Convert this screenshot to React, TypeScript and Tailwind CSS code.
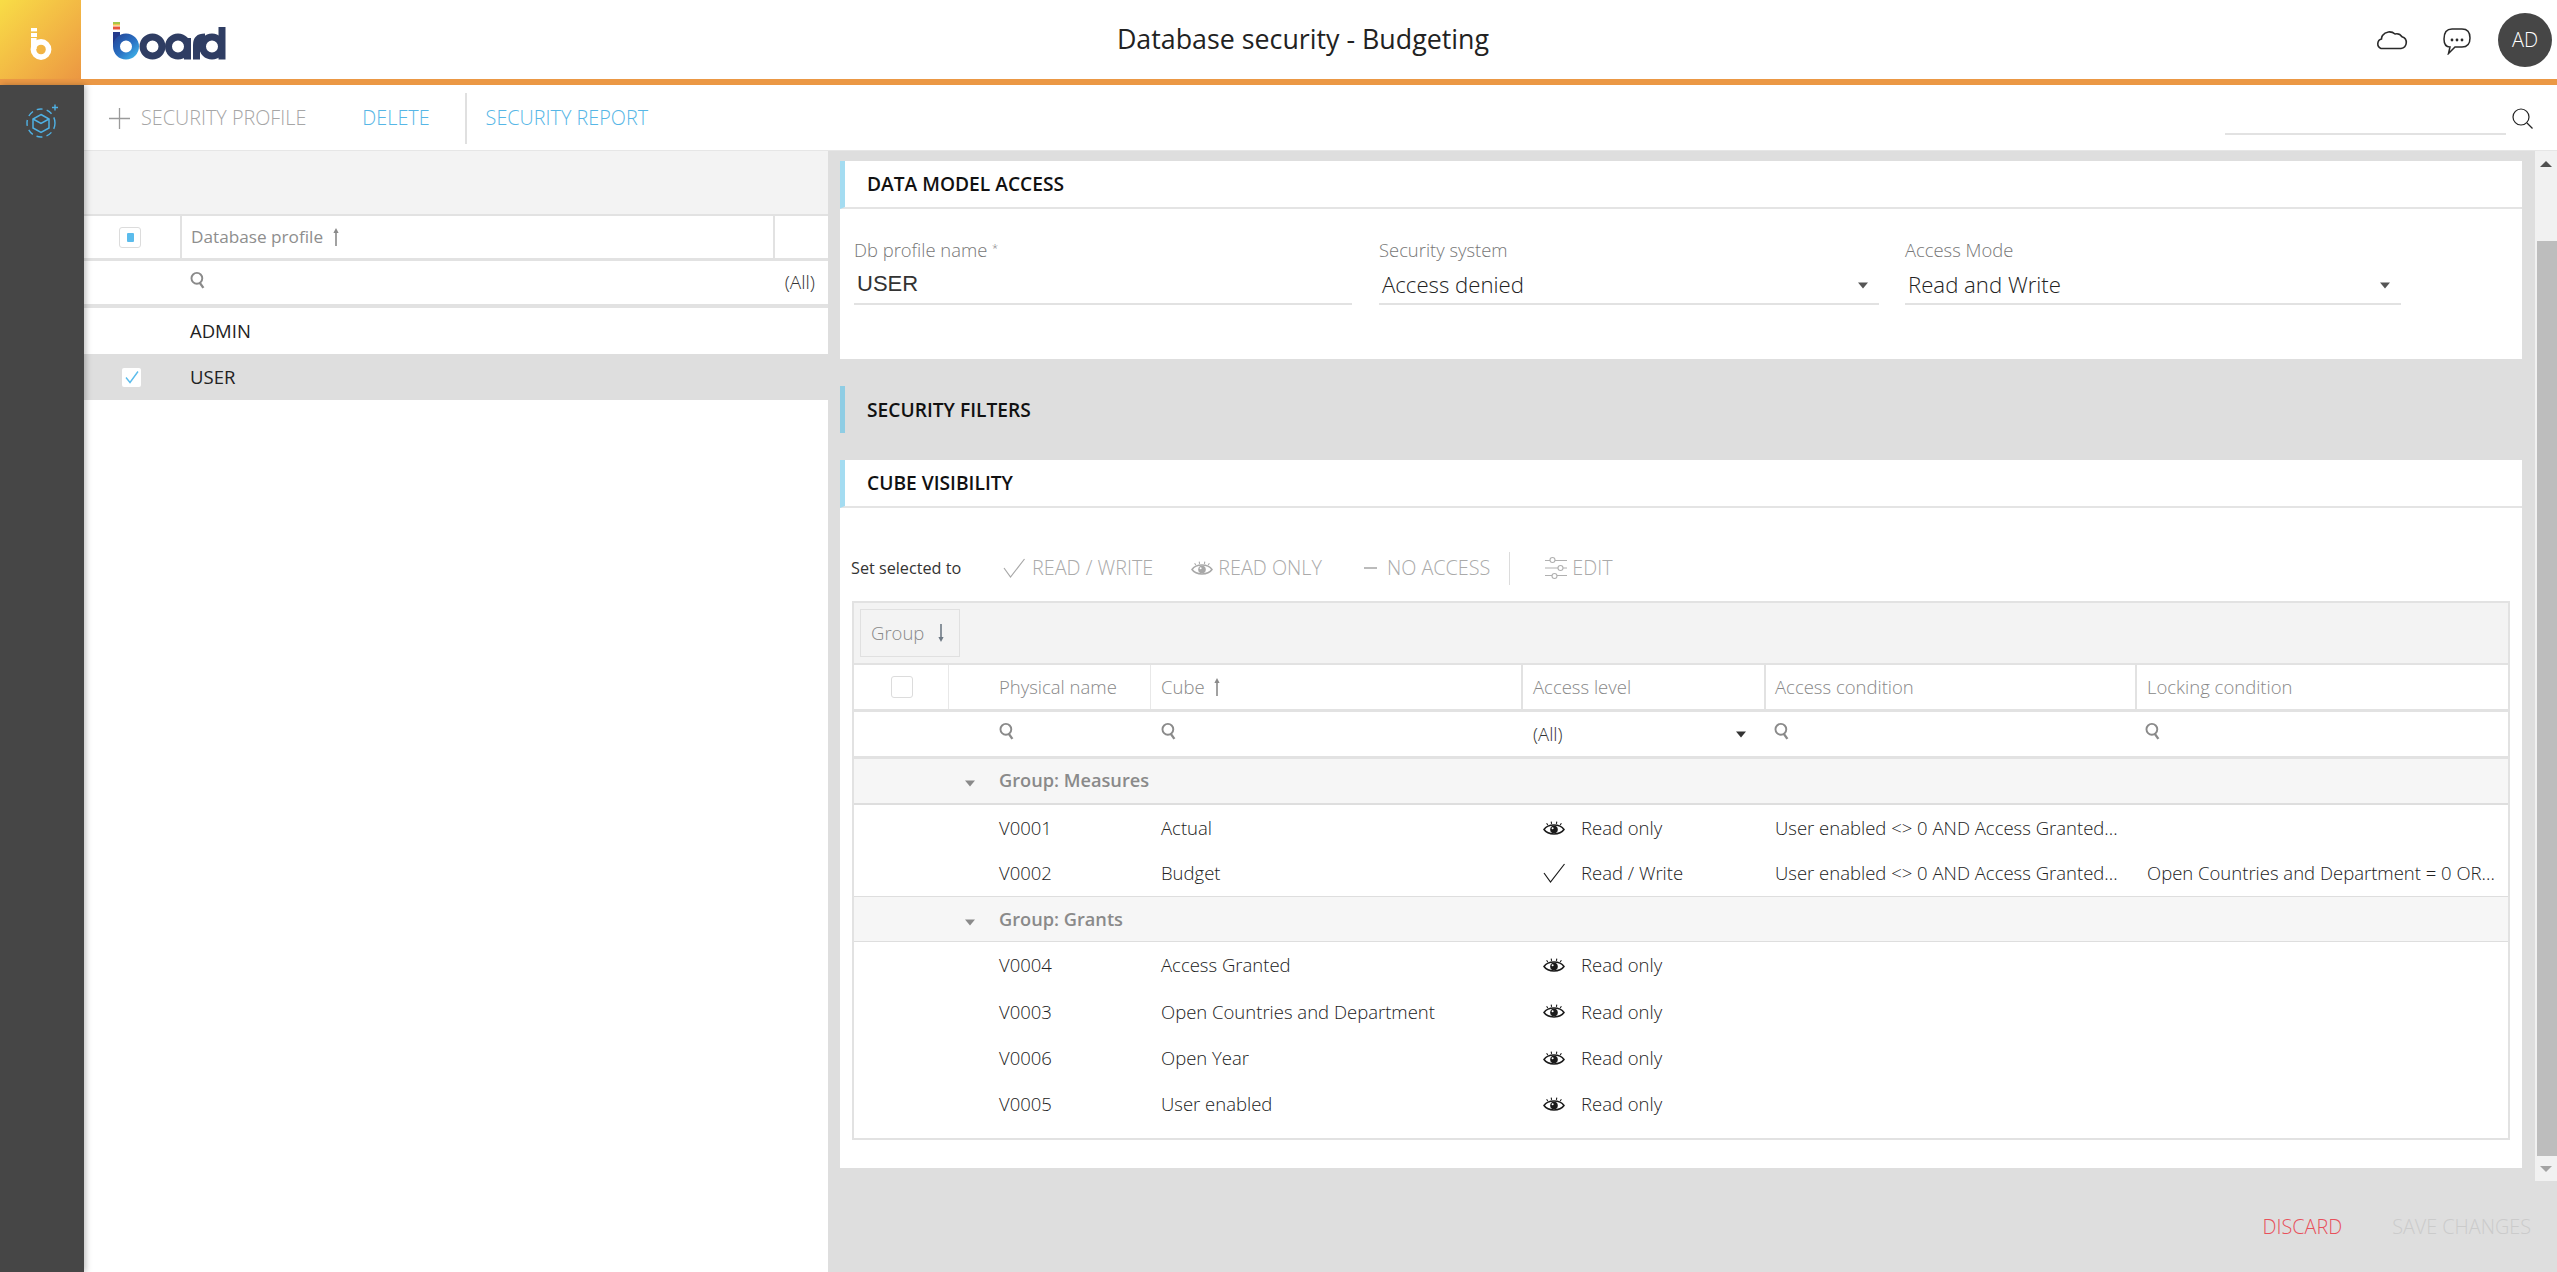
import { ReactNode } from "react";

const cols = "grid grid-cols-[95px_202px_372px_243px_371px_372px]";

function SearchGlyph() {
  return (
    <svg width="16" height="18" viewBox="0 0 14 16" fill="none" stroke="#8a8a8a" strokeWidth="1.7">
      <circle cx="6" cy="6.5" r="4.8" />
      <path d="M8.6 10.5 L11.8 15" strokeWidth="2.1" />
    </svg>
  );
}

function Eye({ color = "#1a1a1a" }: { color?: string }) {
  return (
    <svg width="22" height="14" viewBox="0 0 22 14" fill="none" stroke={color} strokeWidth="1.5">
      <path d="M1 8.5 C5 2.6 17 2.6 21 8.5 C17 14.4 5 14.4 1 8.5 Z" />
      <circle cx="11" cy="8.5" r="3.8" fill={color} stroke="none" />
      <circle cx="9.6" cy="7.2" r="1" fill="white" stroke="none" />
      <path d="M4.8 4 L3.6 2.2 M8.6 2.8 L8.2 0.6 M13.4 2.8 L13.8 0.6 M17.2 4 L18.4 2.2" strokeWidth="1.1" />
    </svg>
  );
}

function Check({ color = "#1a1a1a" }: { color?: string }) {
  return (
    <svg width="22" height="20" viewBox="0 0 22 20" fill="none" stroke={color} strokeWidth="1.2">
      <path d="M1 10 L7.5 19 L21.5 1" />
    </svg>
  );
}

function Caret({ color = "#555" }: { color?: string }) {
  return (
    <svg width="12" height="7" viewBox="0 0 12 7">
      <path d="M1 0.5 H11 L6 6.5 Z" fill={color} />
    </svg>
  );
}

function SortArrow({ down = false, color = "#8a8a8a" }: { down?: boolean; color?: string }) {
  return (
    <svg width="8" height="20" viewBox="0 0 8 20" className={down ? "rotate-180" : ""}>
      <path d="M4 1 L6.6 6 H4.8 V19 H3.2 V6 H1.4 Z" fill={color} />
    </svg>
  );
}

function BoardMark() {
  return (
    <svg width="22" height="34" viewBox="0 0 22 34" fill="white">
      <rect x="1" y="0" width="6" height="3.4" />
      <rect x="1" y="5" width="6" height="4" />
      <path d="M1 10 H6.6 V21 H1 Z" />
      <circle cx="11" cy="21.5" r="7.6" fill="none" stroke="white" strokeWidth="5.6" />
    </svg>
  );
}

function BoardLogo() {
  return (
    <svg width="116" height="40" viewBox="113 22 116 40" fill="none">
      <defs>
        <linearGradient id="bGrad" gradientUnits="userSpaceOnUse" x1="113" y1="32" x2="139" y2="61">
          <stop offset="0" stopColor="#243a8c" />
          <stop offset="0.55" stopColor="#2a72c4" />
          <stop offset="1" stopColor="#45c4f2" />
        </linearGradient>
      </defs>
      <rect x="113" y="23" width="7" height="2" fill="#a4c64a" />
      <rect x="113" y="25" width="7" height="1.6" fill="#f0c24a" />
      <rect x="113" y="27.5" width="7" height="3" fill="#e8543c" />
      <rect x="113" y="33" width="7" height="15" fill="#243a8c" />
      <circle cx="126" cy="47.5" r="9.5" stroke="url(#bGrad)" strokeWidth="7" />
      <g stroke="#2f3d63" strokeWidth="7">
        <circle cx="152.5" cy="47.5" r="9.5" />
        <circle cx="178" cy="47.5" r="9.5" />
        <path d="M187.5 39 V60.5" />
        <path d="M196.5 60.5 V46 Q196.5 38 205 38" />
        <circle cx="212" cy="47.5" r="9.5" />
        <path d="M222 28 V60.5" />
      </g>
    </svg>
  );
}

function ModelIcon() {
  return (
    <svg width="34" height="34" viewBox="0 0 34 34" fill="none" stroke="#4fb1e4" strokeWidth="1.4">
      <circle cx="15" cy="19" r="14" strokeDasharray="6 4.2" />
      <path d="M15 10.5 L23 15 V24 L15 28.5 L7 24 V15 Z" strokeWidth="1.5" />
      <path d="M7 15 L15 19.5 L23 15" strokeWidth="1.5" />
      <path d="M29 0.5 V6.5 M26 3.5 H32" />
    </svg>
  );
}

function SlidersIcon() {
  return (
    <svg width="22" height="24" viewBox="0 0 22 24" fill="none" stroke="#b0b0b0" strokeWidth="1.1">
      <path d="M0 4.5 H5 M10 4.5 H22 M0 12 H13 M18 12 H22 M0 19.5 H7 M12 19.5 H22" />
      <circle cx="7.5" cy="4" r="2.5" />
      <circle cx="15.5" cy="12" r="2.5" />
      <circle cx="9.5" cy="20" r="2.5" />
    </svg>
  );
}

function SectionHead({ title, border = true }: { title: string; border?: boolean }) {
  return (
    <div className={`flex items-center border-l-[5px] pl-[22px] pt-[1px] ${border ? "h-[48px] border-b-2 border-b-[#e4e4e4] border-l-[#a4dcf1]" : "h-[47px] border-l-[#8fcde4]"}`}>
      <span className="text-[19.2px] font-semibold text-[#111]">{title}</span>
    </div>
  );
}

function Field({ label, value, caret, className, valueClass }: { label: ReactNode; value: string; caret?: boolean; className: string; valueClass?: string }) {
  return (
    <div className={className}>
      <div className="text-[18.4px] font-light leading-[22px] text-[#777]">{label}</div>
      <div className="mt-[8px] flex h-[36px] items-center justify-between border-b-2 border-[#e2e2e2] pb-[2px] pl-[3px] pr-[10px] text-[22.2px] font-light leading-[28px] text-[#222]">
        <span className={valueClass}>{value}</span>
        {caret && <Caret />}
      </div>
    </div>
  );
}

function GroupRow({ label, thick }: { label: string; thick?: boolean }) {
  return (
    <div className={`flex items-center bg-[#f6f6f6] ${thick ? "h-[46px] border-b-2" : "h-[45px] border-b pt-[2px]"} border-[#dedede]`}>
      <span className="ml-[110px] mt-[5px]"><Caret color="#8a8a8a" /></span>
      <span className="ml-[23px] text-[18.2px] font-semibold text-[#8a8a8a]">{label}</span>
    </div>
  );
}

function CubeRow({ id, name, level, cond, lock, tight }: { id: string; name: string; level: "ro" | "rw"; cond?: string; lock?: string; tight?: boolean }) {
  return (
    <div className={`${cols} ${tight ? "h-[45.5px]" : "h-[46.3px]"} items-center text-[18.5px] font-light text-[#222]`}>
      <span />
      <span className="pl-[50px]">{id}</span>
      <span className="pl-[10px]">{name}</span>
      <span className="flex items-center pl-[20px]">
        {level === "ro" ? <Eye /> : <Check />}
        <span className="ml-[16px]">{level === "ro" ? "Read only" : "Read / Write"}</span>
      </span>
      <span className="whitespace-nowrap pl-[9px]">{cond}</span>
      <span className="whitespace-nowrap pl-[10px]">{lock}</span>
    </div>
  );
}

const COND = "User enabled <> 0 AND Access Granted...";

export default function App() {
  return (
    <div className="flex h-[1272px] w-[2557px] flex-col overflow-hidden bg-white font-['Open_Sans',sans-serif]">
      {/* top bar */}
      <header className="flex h-[79px] items-stretch">
        <div className="flex h-[81px] w-[81px] items-center justify-center bg-gradient-to-br from-[#f8dd46] to-[#eb9642] pl-[1px] pt-[8px]">
          <BoardMark />
        </div>
        <div className="ml-[32px] flex items-center pt-[3px]"><BoardLogo /></div>
        <div className="flex flex-1 items-center justify-center pl-[3px] text-[26.8px] text-[#222]">Database security - Budgeting</div>
        <div className="flex items-center">
          <svg width="34" height="22" viewBox="0 0 34 22" fill="none" stroke="#2a2a2a" strokeWidth="1.6" className="mb-[2px]">
            <path d="M7 20.5 H27 A6 6 0 0 0 28 8.8 A6.5 6.5 0 0 0 21 6 A8.5 8.5 0 0 0 8.5 7.5 Q7.5 9 7.5 11 A5 5 0 0 0 7 20.5 Z" />
          </svg>
          <svg width="28" height="27" viewBox="0 0 28 27" fill="none" className="ml-[35px] mt-[4px]">
            <path d="M7 19 C3 19 1 16 1 11 C1 4 4 1 9 1 H19 C24 1 27 4 27 10 C27 16 24 19 19 19 H12 L5.5 25.5 L7 19 Z" stroke="#2a2a2a" strokeWidth="1.5" />
            <circle cx="9" cy="12" r="1.4" fill="#2a2a2a" />
            <circle cx="14" cy="12" r="1.4" fill="#2a2a2a" />
            <circle cx="19" cy="12" r="1.4" fill="#2a2a2a" />
          </svg>
          <div className="ml-[27px] mr-[5px] flex h-[54px] w-[54px] items-center justify-center rounded-full bg-[#464646] text-[20px] font-light text-white">AD</div>
        </div>
      </header>
      <div className="h-[6px] bg-[#eb9845]" />

      <div className="flex min-h-0 flex-1">
        <aside className="z-10 flex w-[84px] shrink-0 justify-center bg-[#464646] pl-[2px] pt-[19px] shadow-[2px_0_6px_rgba(0,0,0,0.25)]">
          <div><ModelIcon /></div>
        </aside>

        <div className="flex min-w-0 flex-1 flex-col">
          {/* action bar */}
          <div className="flex h-[65px] shrink-0 items-center pt-[1px] text-[19.8px] font-light">
            <svg width="21" height="21" viewBox="0 0 21 21" stroke="#9a9a9a" strokeWidth="1.3" className="ml-[25px] mt-[1px]">
              <path d="M10.5 0 V21 M0 10.5 H21" />
            </svg>
            <span className="ml-[11px] text-[#a6a6a6]">SECURITY PROFILE</span>
            <span className="ml-[56px] text-[#56b6e6]">DELETE</span>
            <div className="ml-[35px] h-[51px] w-[2px] bg-[#e0e0e0]" />
            <span className="ml-[19px] text-[#56b6e6]">SECURITY REPORT</span>
            <div className="ml-auto flex items-center">
              <div className="mt-[32px] h-[1px] w-[281px] border-b-2 border-[#e2e2e2]" />
              <svg width="22" height="22" viewBox="0 0 22 22" fill="none" stroke="#222" strokeWidth="1.2" className="ml-[6px] mr-[23px] mt-[1px]">
                <circle cx="9" cy="9" r="8" />
                <path d="M15 15 L20.5 20.5" />
              </svg>
            </div>
          </div>

          <div className="flex min-h-0 flex-1 border-t border-[#e6e6e6]">
            {/* profiles list */}
            <section className="w-[744px] shrink-0 bg-white">
              <div className="h-[63px] bg-[#f3f3f3]" />
              <div className="grid h-[47px] grid-cols-[96px_595px_1fr] border-t-2 border-b-[3px] border-[#e2e2e2] text-[17.2px] font-medium text-[#8e8e8e]">
                <div className="flex items-center justify-center pr-[4px]">
                  <div className="flex h-[21px] w-[22px] items-center justify-center rounded-[3px] border border-[#dcdcdc] bg-white">
                    <div className="h-[9px] w-[7px] rounded-[1px] bg-[#5bbcec]" />
                  </div>
                </div>
                <div className="flex items-center gap-[9px] border-x-2 border-[#e2e2e2] pl-[9px]">
                  Database profile <SortArrow />
                </div>
                <div />
              </div>
              <div className="relative flex h-[47px] items-center border-b-[4px] border-[#e2e2e2] pl-[106px] pb-[6px]">
                <SearchGlyph />
                <span className="absolute right-[13px] top-[7px] text-[19px] font-light text-[#333]">(All)</span>
              </div>
              <div className="flex h-[46px] items-center pl-[106px] text-[18.5px] text-[#222]">ADMIN</div>
              <div className="flex h-[46px] items-center bg-[#dedede] text-[18.5px] text-[#222]">
                <div className="ml-[38px] flex h-[19px] w-[19px] items-center justify-center rounded-[2px] bg-white">
                  <svg width="14" height="14" viewBox="0 0 14 14" fill="none" stroke="#5bbcec" strokeWidth="1.4">
                    <path d="M1 7.5 L5 12.5 L13 1.5" />
                  </svg>
                </div>
                <span className="ml-[49px]">USER</span>
              </div>
            </section>

            {/* right side */}
            <section className="flex min-w-0 flex-1 flex-col bg-[#dedede]">
              <div className="flex">
                <div className="ml-[12px] w-[1682px] pt-[10px]">
                  <div className="h-[198px] bg-white">
                    <SectionHead title="DATA MODEL ACCESS" />
                    <div className="flex pt-[30px]">
                      <Field className="ml-[14px] w-[498px]" label={<>Db profile name <sup className="text-[11px]">*</sup></>} value="USER" valueClass="font-['Liberation_Sans',sans-serif] font-normal text-[#333] text-[22px] -mt-[2px]" />
                      <Field className="ml-[27px] w-[500px]" label="Security system" value="Access denied" caret />
                      <Field className="ml-[26px] w-[496px]" label="Access Mode" value="Read and Write" caret />
                    </div>
                  </div>

                  <div className="mt-[27px]"><SectionHead title="SECURITY FILTERS" border={false} /></div>

                  <div className="mt-[27px] h-[708px] bg-white">
                    <SectionHead title="CUBE VISIBILITY" />
                    <div className="flex h-[93px] items-center pl-[11px] pt-[27px] text-[19.8px] font-light text-[#aaa]">
                      <span className="w-[152px] text-[16.2px] font-normal text-[#333]">Set selected to</span>
                      <Check color="#a8a8a8" />
                      <span className="ml-[7px]">READ / WRITE</span>
                      <span className="ml-[38px]"><Eye color="#a8a8a8" /></span>
                      <span className="ml-[5px]">READ ONLY</span>
                      <span className="ml-[42px] h-[2px] w-[13px] bg-[#bbb]" />
                      <span className="ml-[10px]">NO ACCESS</span>
                      <span className="ml-[19px] h-[33px] w-[1px] bg-[#dcdcdc]" />
                      <span className="ml-[35px]"><SlidersIcon /></span>
                      <span className="ml-[5px]">EDIT</span>
                    </div>

                    {/* cube table */}
                    <div className="ml-[12px] w-[1658px] border-2 border-[#e2e2e2]">
                      <div className="flex h-[62px] items-center border-b-2 border-[#e2e2e2] bg-[#f3f3f3] pl-[6px]">
                        <div className="flex h-[48px] w-[100px] items-center gap-[13px] border border-[#e0e0e0] pl-[10px] text-[18.5px] font-light text-[#888]">
                          Group <SortArrow down color="#6f7a85" />
                        </div>
                      </div>
                      <div className={`${cols} h-[47px] border-b-[3px] border-[#e2e2e2] text-[18.5px] font-light text-[#888]`}>
                        <div className="flex items-center justify-center border-r border-[#e8e8e8] pl-[2px]">
                          <div className="h-[22px] w-[22px] rounded-[3px] border border-[#dcdcdc]" />
                        </div>
                        <div className="flex items-center border-r border-[#e8e8e8] pl-[50px]">Physical name</div>
                        <div className="flex items-center gap-[8px] border-r-2 border-[#e2e2e2] pl-[10px]">Cube <SortArrow /></div>
                        <div className="flex items-center border-r-2 border-[#e2e2e2] pl-[10px]">Access level</div>
                        <div className="flex items-center border-r-2 border-[#e2e2e2] pl-[9px]">Access condition</div>
                        <div className="flex items-center pl-[10px]">Locking condition</div>
                      </div>
                      <div className={`${cols} h-[47px] items-center border-b-[3px] border-[#e2e2e2] text-[18.5px] font-light text-[#333]`}>
                        <span />
                        <span className="pb-[6px] pl-[50px]"><SearchGlyph /></span>
                        <span className="pb-[6px] pl-[10px]"><SearchGlyph /></span>
                        <span className="flex items-center justify-between pl-[10px] pr-[19px]">(All) <Caret color="#333" /></span>
                        <span className="pb-[6px] pl-[8px]"><SearchGlyph /></span>
                        <span className="pb-[6px] pl-[8px]"><SearchGlyph /></span>
                      </div>
                      <GroupRow label="Group: Measures" thick />
                      <CubeRow id="V0001" name="Actual" level="ro" cond={COND} tight />
                      <CubeRow id="V0002" name="Budget" level="rw" cond={COND} lock="Open Countries and Department = 0 OR..." tight />
                      <div className="border-t border-[#dedede]"><GroupRow label="Group: Grants" /></div>
                      <CubeRow id="V0004" name="Access Granted" level="ro" />
                      <CubeRow id="V0003" name="Open Countries and Department" level="ro" />
                      <CubeRow id="V0006" name="Open Year" level="ro" />
                      <CubeRow id="V0005" name="User enabled" level="ro" />
                      <div className="h-[11px]" />
                    </div>
                  </div>
                </div>

                {/* scrollbar */}
                <div className="ml-[13px] flex h-[1030px] w-[22px] flex-col items-center bg-[#f1f1f1]">
                  <div className="flex h-[24px] shrink-0 items-center justify-center pt-[1px]">
                    <svg width="12" height="6" viewBox="0 0 12 6"><path d="M0 6 L6 0 L12 6 Z" fill="#505050" /></svg>
                  </div>
                  <div className="ml-[2px] mt-[66px] w-[20px] flex-1 bg-[#bdbdbd]" />
                  <div className="flex h-[25px] shrink-0 items-center justify-center">
                    <svg width="12" height="6" viewBox="0 0 12 6"><path d="M0 0 L6 6 L12 0 Z" fill="#a3a3a3" /></svg>
                  </div>
                </div>
              </div>

              <div className="mr-[26px] mt-[31px] flex justify-end gap-[50px] text-[19.8px] font-light">
                <span className="text-[#e8505b]">DISCARD</span>
                <span className="text-[#cbcbcb]">SAVE CHANGES</span>
              </div>
            </section>
          </div>
        </div>
      </div>
    </div>
  );
}
